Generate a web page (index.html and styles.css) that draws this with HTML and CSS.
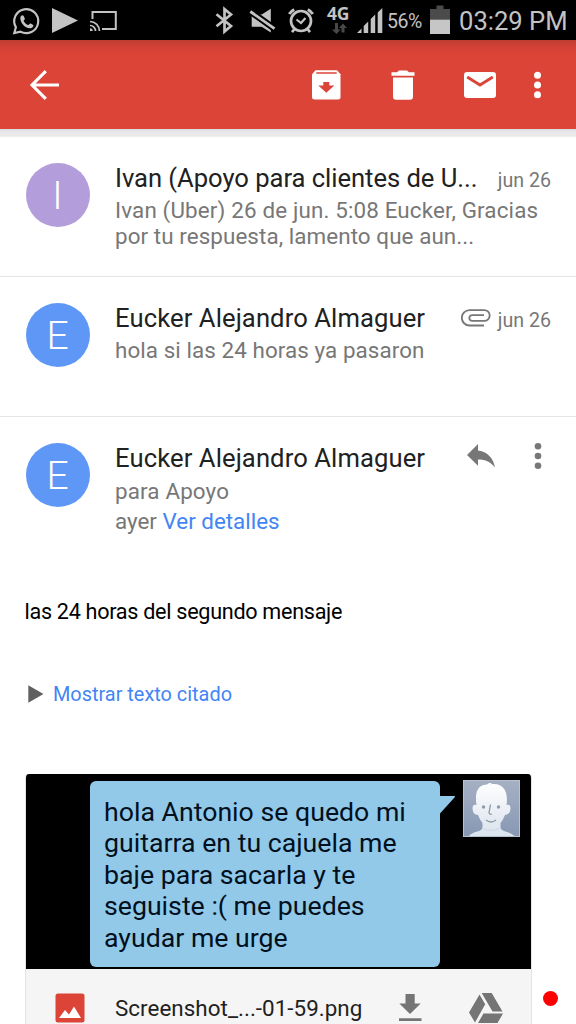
FILE: index.html
```html
<!DOCTYPE html>
<html lang="es">
<head>
<meta charset="utf-8">
<title>Correo</title>
<link rel="stylesheet" href="styles.css">
</head>
<body>
<div class="screen">
  <header class="status">
    <svg class="status-left" width="120" height="40" viewBox="0 0 120 40" fill="none" stroke="#c3c3c3">
      <path d="M14.300 33l1.600-5.800a12 12 0 1 1 4.500 4.400z" stroke-width="2.200"/>
      <path d="M20.300 17.400c1-2.500 2.800-2.800 3.600-1l.9 2.200c.4 1-.9 1.700-1.200 2.400 1.100 2 2.500 3.300 4.600 4.100.8-.5 1.500-2 2.500-1.500l2.200 1.100c1.700.8-.7 3.700-3 3.600-5.200-.5-9.700-5.400-9.600-10.900z" fill="#c3c3c3" stroke="none"/>
      <path d="M52 8v25l26-12.500z" fill="#c3c3c3" stroke="none"/>
      <path d="M92.500 19v-7h23.300v17h-13.800" stroke-width="2"/>
      <path d="M90 21.500a9.500 9.500 0 0 1 9.500 9.500M90 25.500a5.500 5.500 0 0 1 5.500 5.500" stroke-width="1.700"/>
      <path d="M90 28.300a2.700 2.700 0 0 1 2.700 2.700H90z" fill="#c3c3c3" stroke="none"/>
    </svg>
    <div class="status-right">
      <svg width="106" height="40" viewBox="214 0 106 40" fill="none" stroke="#c3c3c3">
        <path d="M216.500 14.200L231 26l-6.500 5.500V9.200L231 14.500 216.500 26.200" stroke-width="2.700"/>
        <path d="M251.700 14.500h10L270.800 8.700v23.800l-9.100-5.700h-10z" fill="#c3c3c3" stroke="none"/>
        <path d="M249 10.500l26 18.500" stroke="#000" stroke-width="6.500"/>
        <path d="M250.300 11.500l24.200 17.200" stroke-width="2.800"/>
        <circle cx="301" cy="21" r="10" stroke-width="2.700"/>
        <path d="M296.500 19.500l4.500 3.500 4.500-5" stroke-width="2.200"/>
        <path d="M289.200 14a15 15 0 0 1 5-4.500M312.800 14a15 15 0 0 0-5-4.500" stroke-width="3"/>
        <path d="M294.500 29l-2.500 3.200M307.500 29l2.500 3.200" stroke-width="2.700"/>
      </svg>
      <div class="network">
        <span class="network-label">4G</span>
        <svg width="16" height="12" viewBox="0 0 16 12" fill="#484848"><path d="M4 0h3v6.500h2.500L5.500 11 1 6.500h3zM10.500 9.500V5H8l4-4.500L16 5h-2.500v4.500z"/></svg>
      </div>
      <svg class="signal" width="26" height="40" viewBox="0 0 26 40" fill="#c3c3c3"><path d="M0 33l4.500-4.500V33zM6.700 26l4.500-4.500V33H6.700zM13.700 19l4.500-4.500V33h-4.500zM20.700 12.500L25.300 8v25h-4.600z"/></svg>
      <span class="percent">56%</span>
      <svg class="battery" width="20" height="40" viewBox="0 0 20 40"><path d="M6.500 5.500h7V9H20v11H0V9h6.500z" fill="#4b4b4b"/><path d="M0 19.700h20V34H0z" fill="#c6c6c6"/></svg>
      <span class="clock">03:29 PM</span>
    </div>
  </header>

  <nav class="toolbar">
    <svg class="back" width="30" height="30" viewBox="0 0 30 30" fill="none" stroke="#fff" stroke-width="3.100"><path d="M30 15H3M16.800 1.200L3 15l13.800 13.800"/></svg>
    <div class="actions">
      <svg width="30" height="30" viewBox="0 0 30 30"><path d="M4.500.3h21.500l3.500 4V27q0 2.500-2.500 2.500H3.500Q1 29.500 1 27V4.300z" fill="#fff"/><path d="M5.300 2.200h20.400v1.500H5.300zM12.300 12h6v3.500h5l-8 7.300-8-7.300h5z" fill="#db4437"/></svg>
      <svg class="trash" width="24" height="30" viewBox="0 0 24 30" fill="#fff"><path d="M.5 2.200H6L8 .5h8l2 1.700h5.500v3.500H.5zM2 7.500h20v19.300q0 3-3 3H5q-3 0-3-3z"/></svg>
      <svg class="mail" width="32" height="26" viewBox="0 0 32 26"><rect width="32" height="26" rx="3" fill="#fff"/><path d="M3.200 5L16 13 28.800 5" fill="none" stroke="#db4437" stroke-width="2.800"/></svg>
      <svg class="more" width="8" height="28" viewBox="0 0 8 28" fill="#fff"><circle cx="3.500" cy="4.200" r="3.500"/><circle cx="3.500" cy="14" r="3.500"/><circle cx="3.500" cy="23.800" r="3.500"/></svg>
    </div>
  </nav>
  <div class="toolbar-shadow"></div>

  <main>
    <article class="message">
      <div class="avatar purple">I</div>
      <div class="message-text">
        <div class="message-head"><span class="sender sender-long">Ivan (Apoyo para clientes de U...</span><span class="date">jun 26</span></div>
        <div class="snippet"><span class="snippet-wide">Ivan (Uber) 26 de jun. 5:08 Eucker, Gracias</span><br><span>por tu respuesta, lamento que aun...</span></div>
      </div>
    </article>
    <article class="message">
      <div class="avatar">E</div>
      <div class="message-text">
        <div class="message-head"><span class="sender">Eucker Alejandro Almaguer</span>
          <span class="date-group"><svg width="30" height="18" viewBox="0 0 30 18" fill="none" stroke="#777" stroke-width="1.800"><path d="M23 16.500H8.500a7.700 7.700 0 0 1 0-15.400h14.800a5.200 5.200 0 0 1 0 10.800H11.200a2.900 2.900 0 0 1 0-5.800H23"/></svg><span class="date">jun 26</span></span>
        </div>
        <div class="snippet"><span>hola si las 24 horas ya pasaron</span></div>
      </div>
    </article>
    <article class="message open">
      <div class="avatar">E</div>
      <div class="message-text">
        <div class="message-head"><span class="sender">Eucker Alejandro Almaguer</span>
          <span class="message-actions">
            <svg width="30" height="26" viewBox="0 0 30 26" fill="#777"><path d="M12 1v6.500C22.500 9 27.500 16 29 24.500 24.500 19 20 16.500 12 16.500v6.300L1 12z"/></svg>
            <svg width="8" height="28" viewBox="0 0 8 28" fill="#777"><circle cx="4" cy="4.200" r="3.300"/><circle cx="4" cy="14" r="3.300"/><circle cx="4" cy="23.800" r="3.300"/></svg>
          </span>
        </div>
        <div class="details"><span class="recipient">para Apoyo</span><br><span>ayer <a class="link">Ver detalles</a></span></div>
      </div>
    </article>

    <p class="body-text">las 24 horas del segundo mensaje</p>
    <div class="quoted"><svg width="16" height="18" viewBox="0 0 16 18"><path d="M.3.300v17.400L15.500 9z" fill="#606060"/></svg><span class="link">Mostrar texto citado</span></div>

    <section class="attachment">
      <div class="preview">
        <div class="bubble">hola Antonio se quedo mi<br>guitarra en tu cajuela me<br>baje para sacarla y te<br>seguiste :( me puedes<br>ayudar me urge</div>
        <svg class="tail" width="16" height="20" viewBox="0 0 16 20"><path d="M0 1h14.500q1 .3 0 1.500L0 18.500z" fill="#92c9e9"/></svg>
        <svg class="contact" width="57" height="57" viewBox="0 0 57 57">
          <defs>
            <linearGradient id="back" x1="0" y1="0" x2="0" y2="1"><stop offset="0" stop-color="#a5b0c3"/><stop offset="1" stop-color="#8898b3"/></linearGradient>
            <linearGradient id="skin" x1="0" y1="0" x2="0" y2="1"><stop offset="0" stop-color="#fff"/><stop offset=".7" stop-color="#e4eaf2"/><stop offset="1" stop-color="#dce4ee"/></linearGradient>
          </defs>
          <rect x=".5" y=".5" width="56" height="56" fill="url(#back)" stroke="#b8c1ce"/>
          <path d="M13.500 25C11 9 17 5 24 4.500q2-2 5-1.300-1 .8-2 1.300C38 2 46 9 43.500 25q4-1 4 3.500 0 6-5.500 6.500-2 5-4.500 8v4q0 3 5 4.500 6 1.500 9 4.500H6q2-3 8.500-4.500 5-1.500 5-4.500v-4q-2.500-3-4.500-8-5.500-.5-5.500-6.500 0-4.500 4-3.500z" fill="url(#skin)"/>
          <path d="M19 48q9 5 18 0" fill="none" stroke="#cdd7e4" stroke-width="1"/>
          <circle cx="20.500" cy="27" r="1.700" fill="#929aa8"/><circle cx="35.500" cy="27" r="1.700" fill="#929aa8"/>
          <path d="M27.500 24.500l-1.500 8.500q1 2 3 1M23 40q5 4 10 0" fill="none" stroke="#8e97a6" stroke-width="1.300"/>
        </svg>
      </div>
      <div class="file">
        <svg width="30" height="30" viewBox="0 0 30 30"><rect x=".5" y=".5" width="29" height="29" rx="2.500" fill="#db4437"/><path d="M4 25l6-8 4 4.500 5-8L26 25z" fill="#fff"/></svg>
        <span class="filename">Screenshot_...-01-59.png</span>
        <svg class="download" width="24" height="30" viewBox="0 0 24 30" fill="#757575"><path d="M7.500 1h9.200v9.500h6L12 21 1.300 10.500h6.200zM1 25.200h22.500V28H1z"/></svg>
        <svg class="drive" width="36" height="32" viewBox="0 0 36 32" fill="#757575"><path d="M11.500 2.500l5.700 9.700L7 30.500 1 20.500zM13.700 1h10L34.500 19.500h-10zM15.500 21.500H35l-5.500 9.500H10z"/></svg>
      </div>
    </section>
  </main>
  <div class="record-dot"></div>
</div>
</body>
</html>
```

FILE: styles.css
```css
* { box-sizing: border-box; }
body { margin: 0; background: #fff; font-family: Roboto, "Open Sans", sans-serif; color: #212121; }
svg { display: block; flex: none; }
span { white-space: nowrap; }
.screen { position: relative; width: 576px; height: 1024px; overflow: hidden; }
.status { display: flex; justify-content: space-between; height: 40px; background: #000; color: #c3c3c3; }
.status-right { display: flex; padding-right: 8px; }
.network { width: 36px; padding: 3px 0 0 7px; }
.network-label { display: block; font: 700 17.5px/20px "Open Sans", sans-serif; letter-spacing: -.3px; }
.network svg { margin: 0 0 0 4px; }
.signal { margin-left: 1px; }
.percent { width: 44px; padding-left: 4px; font-size: 19.5px; line-height: 43px; letter-spacing: -.5px; }
.battery { margin-left: 3px; }
.clock { width: 109px; margin-left: 9px; font-size: 25.6px; line-height: 42px; }
.toolbar { display: flex; justify-content: space-between; align-items: center; height: 89px; padding: 0 34px 0 29px; background: linear-gradient(#bd3d33, #d54136 8px, #db4437 16px); }
.actions { display: flex; align-items: center; }
.trash { margin-left: 50px; }
.mail { margin-left: 49px; }
.more { margin-left: 38px; }
.toolbar-shadow { height: 8px; background: linear-gradient(#d9d9db, #e6e6e8 2px, #ececee 6px, #e2e9d9 7px, #f8f8f8); }
.message { display: flex; height: 140px; padding: 25px 25px 0 25.5px; border-bottom: 1px solid #e5e5e5; }
.message.open { height: 153px; border: 0; }
.avatar { flex: none; width: 64px; height: 64px; margin-top: 1px; border-radius: 50%; background: #5e97f6; color: #fff; font-size: 39px; font-weight: 300; line-height: 66px; text-align: center; }
.purple { background: #b39ddb; }
.message-text { flex: 1; min-width: 0; padding-left: 25.5px; }
.message-head { display: flex; justify-content: space-between; height: 32px; }
.sender { font-size: 25.6px; line-height: 32px; letter-spacing: .1px; }
.sender-long { letter-spacing: -.04px; }
.date { color: #777; font-size: 19.6px; line-height: 37px; }
.date-group { display: flex; gap: 7px; }
.date-group svg { margin-top: 6.500px; }
.snippet { margin-top: 3px; color: #777; font-size: 22.4px; line-height: 26.3px; letter-spacing: .08px; }
.snippet-wide { letter-spacing: .15px; }
.details { margin-top: 2px; color: #777; font-size: 22.4px; line-height: 30.4px; }
.recipient { letter-spacing: .15px; }
.link { color: #4285f4; }
.message-actions { display: flex; align-items: center; gap: 38px; padding-right: 9.5px; height: 28px; }
.body-text { margin: 27px 0 0 24.5px; color: #000; font-size: 21.6px; line-height: 30px; letter-spacing: -.29px; }
.quoted { display: flex; align-items: center; gap: 9px; height: 28px; margin: 53px 0 0 28px; font-size: 19.9px; }
.attachment { width: 507px; height: 270px; margin: 66px 0 0 25px; border: 1px solid #e4e4e4; border-top: 0; border-radius: 4px 4px 0 0; background: #f5f5f5; overflow: hidden; }
.preview { display: flex; height: 195px; padding: 7px 0 0 64px; background: #000; }
.bubble { width: 350px; height: 186px; padding: 16px 0 0 14px; border-radius: 6px; background: #92c9e9; color: #02101d; font-size: 26.7px; line-height: 31.4px; white-space: nowrap; }
.tail { margin-top: 14px; }
.contact { margin-left: 7px; margin-top: -1px; }
.file { display: flex; align-items: center; height: 78px; padding-left: 29px; }
.filename { width: 252px; margin-left: 30px; font-size: 22.4px; letter-spacing: .04px; }
.download { margin-left: 31px; }
.drive { margin-left: 46px; }
.record-dot { position: absolute; left: 542.5px; top: 990.5px; width: 15px; height: 15px; border-radius: 50%; background: #f00; }
```
